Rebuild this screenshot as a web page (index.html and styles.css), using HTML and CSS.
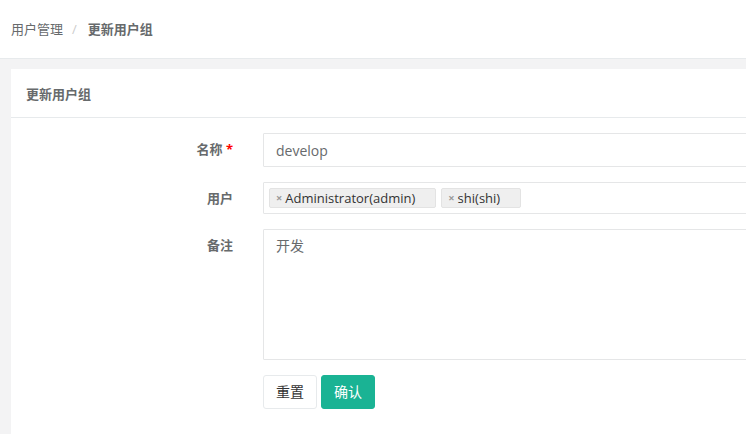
FILE: index.html
```html
<!DOCTYPE html>
<html lang="zh-CN">
<head>
<meta charset="utf-8">
<title>更新用户组</title>
<link rel="stylesheet" href="styles.css">
</head>
<body>
<header class="topbar">
  <nav class="breadcrumb">
    <span class="crumb">用户管理</span>
    <span class="sep">/</span>
    <span class="crumb current">更新用户组</span>
  </nav>
</header>
<main class="page">
  <section class="card">
    <div class="card-title">更新用户组</div>
    <form class="card-body">
      <label class="form-label">名称 <span class="req">*</span></label>
      <div class="field"><input class="control" type="text" value="develop"></div>

      <label class="form-label">用户</label>
      <div class="field">
        <div class="control tags">
          <span class="tag"><span class="tag-x">×</span>Administrator(admin)</span>
          <span class="tag"><span class="tag-x">×</span>shi(shi)</span>
        </div>
      </div>

      <label class="form-label">备注</label>
      <div class="field"><textarea class="control area">开发</textarea></div>

      <div class="spacer"></div>
      <div class="field actions">
        <button type="button" class="btn btn-white">重置</button>
        <button type="button" class="btn btn-primary">确认</button>
      </div>
    </form>
  </section>
</main>
</body>
</html>
```
FILE: styles.css
```css
html, body {
  margin: 0;
  padding: 0;
  height: 100%;
  overflow: hidden;
}
body {
  background: #f3f3f4;
  font-family: "Open Sans", "Noto Sans CJK SC", sans-serif;
  font-size: 13px;
  color: #676a6c;
}
.topbar {
  background: #fff;
  height: 58px;
  border-bottom: 1px solid #e7eaec;
  display: flex;
  align-items: center;
  padding-left: 11px;
}
.breadcrumb {
  display: flex;
  align-items: center;
  font-size: 13px;
  line-height: 20px;
}
.sep {
  color: #ccc;
  padding: 0 11px 0 9px;
}
.crumb.current {
  font-weight: bold;
}
.page {
  padding: 10px 0 0 11px;
  height: calc(100% - 69px);
  box-sizing: content-box;
}
.card {
  background: #fff;
  width: calc(100% + 120px);
  height: 100%;
}
.card-title {
  height: 48px;
  border-bottom: 1px solid #e7eaec;
  display: flex;
  align-items: center;
  padding-left: 15px;
  font-weight: bold;
  font-size: 13px;
}
.card-body {
  display: grid;
  grid-template-columns: 222px 1fr;
  column-gap: 15px;
  row-gap: 15px;
  padding: 15px 15px 0 15px;
  margin: 0;
}
.form-label {
  text-align: right;
  padding: 6px 15px 0 0;
  font-weight: bold;
  line-height: 20px;
  font-size: 13px;
}
.req {
  color: red;
}
.field {
  min-width: 0;
}
.control {
  display: block;
  width: 100%;
  box-sizing: border-box;
  border: 1px solid #e5e6e7;
  border-radius: 1px;
  background: #fff;
  font-family: "Open Sans", "Noto Sans CJK SC", sans-serif;
  font-size: 14px;
  color: #676a6c;
  height: 34px;
  padding: 6px 12px;
  margin: 0;
  outline: none;
}
.tags {
  height: 32px;
  padding: 5px;
  display: flex;
  gap: 5px;
  align-items: flex-start;
}
.tag {
  display: inline-flex;
  align-items: center;
  height: 20px;
  box-sizing: border-box;
  background: #efefef;
  border: 1px solid #e3e3e3;
  border-radius: 2px;
  padding: 0 20px 0 6px;
  font-size: 13px;
  color: #333;
  line-height: 18px;
}
.tag-x {
  color: #999;
  font-weight: bold;
  font-size: 11px;
  margin-right: 3px;
}
.area {
  height: 131px;
  resize: none;
  line-height: 20px;
}
.actions {
  display: flex;
  gap: 4px;
}
.btn {
  height: 34px;
  padding: 6px 12px;
  font-family: "Open Sans", "Noto Sans CJK SC", sans-serif;
  font-size: 14px;
  line-height: 20px;
  border-radius: 3px;
  cursor: pointer;
}
.btn-white {
  background: #fff;
  border: 1px solid #e7eaec;
  color: #333;
}
.btn-primary {
  background: #1ab394;
  border: 1px solid #1ab394;
  color: #fff;
}
```
